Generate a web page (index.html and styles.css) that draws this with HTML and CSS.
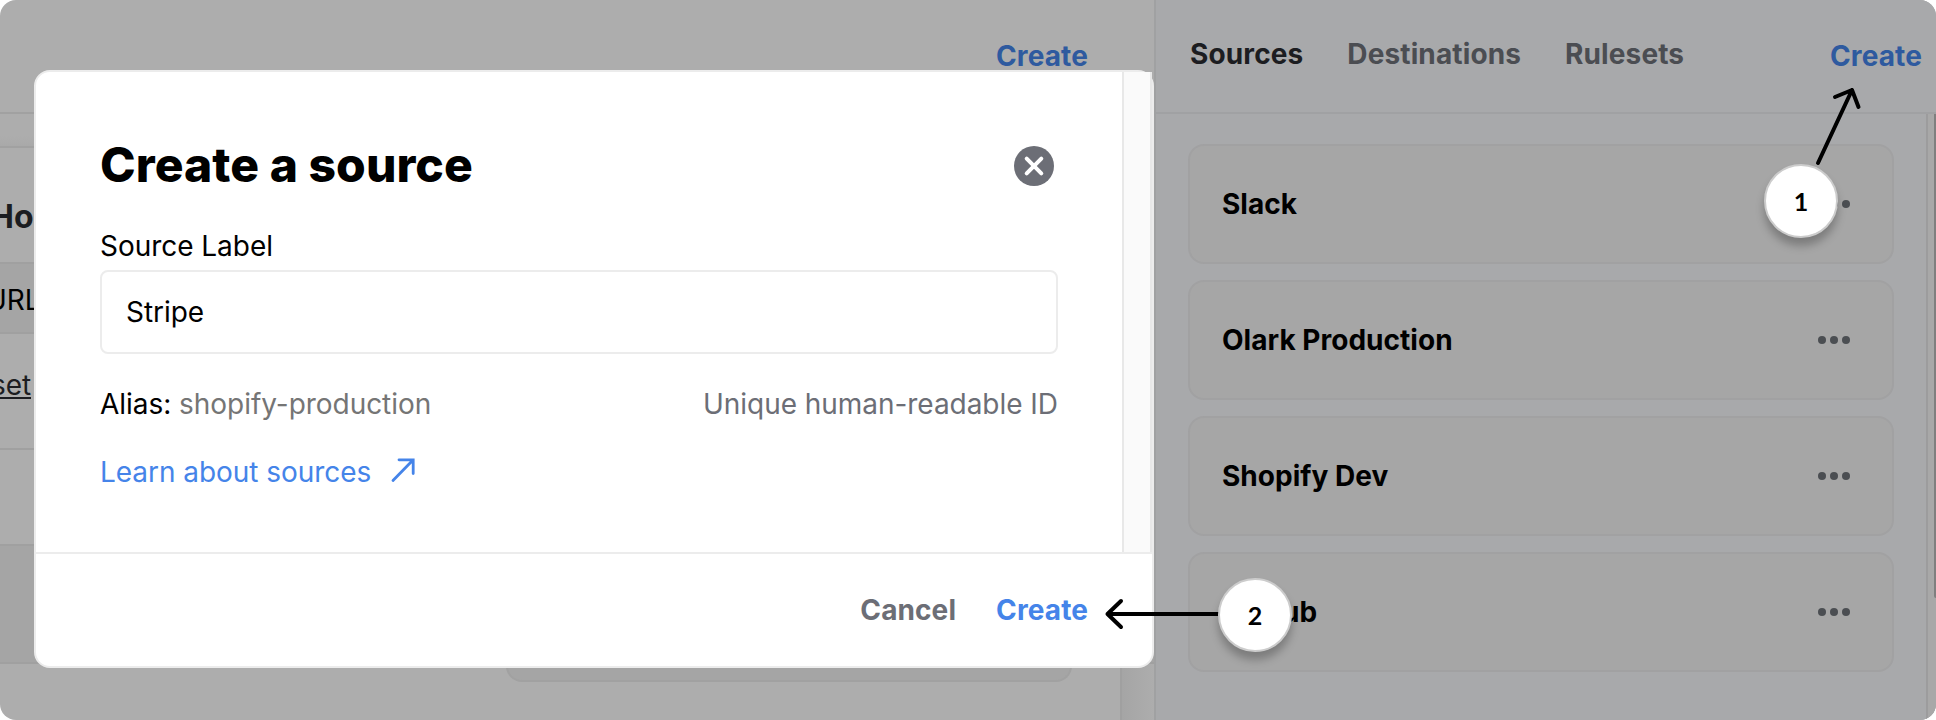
FILE: index.html
```html
<!DOCTYPE html>
<html lang="en">
<head>
<meta charset="utf-8">
<title>Create a source</title>
<link rel="stylesheet" href="styles.css">
</head>
<body>
<div class="stage">
  <section class="left">
    <header class="bar left-bar"><a class="link-create">Create</a></header>
    <div class="rows">
      <div class="gap-row"></div>
      <div class="row row-title">Ho</div>
      <div class="row row-url">URL</div>
      <div class="row row-set"><span>set</span></div>
      <div class="row row-empty"></div>
      <div class="row row-shade"></div>
      <div class="rest"><div class="bottom-card"></div><div class="left-track"></div></div>
    </div>
  </section>
  <section class="right">
    <header class="bar right-bar">
      <nav class="tabs"><span class="active">Sources</span><span>Destinations</span><span>Rulesets</span></nav>
      <a class="link-create">Create</a>
    </header>
    <div class="right-body">
      <div class="cards">
        <div class="card"><b>Slack</b><span class="dots"><i></i><i></i><i></i></span></div>
        <div class="card"><b>Olark Production</b><span class="dots"><i></i><i></i><i></i></span></div>
        <div class="card"><b>Shopify Dev</b><span class="dots"><i></i><i></i><i></i></span></div>
        <div class="card"><b>GitHub</b><span class="dots"><i></i><i></i><i></i></span></div>
      </div>
      <div class="track"><div class="thumb"></div></div>
    </div>
  </section>

  <div class="modal">
    <div class="modal-main">
      <div class="modal-content">
        <div class="modal-head">
          <h1>Create a source</h1>
          <svg class="close" width="40" height="40" viewBox="0 0 40 40"><circle cx="20" cy="20" r="20" fill="#6c6e76"/><path d="M12.7 12.7 27.3 27.3M27.3 12.7 12.7 27.3" stroke="#fff" stroke-width="4" stroke-linecap="round"/></svg>
        </div>
        <label class="label">Source Label</label>
        <div class="input">Stripe</div>
        <div class="alias"><span>Alias: <span class="slug">shopify-production</span></span><span class="hint">Unique human-readable ID</span></div>
        <a class="learn">Learn about sources <svg width="24" height="26" viewBox="0 0 24 26" fill="none" stroke="#4584e9" stroke-width="2.8" stroke-linecap="round"><path d="M2 23.500 22 3M8 2.800H22.200V16.500"/></svg></a>
      </div>
      <div class="modal-track"></div>
    </div>
    <footer class="modal-foot"><span class="cancel">Cancel</span><span class="create">Create</span></footer>
  </div>

  <svg class="arrows" width="1936" height="720" viewBox="0 0 1936 720" fill="none" stroke="#000" stroke-width="4" stroke-linecap="round" stroke-linejoin="round"><path d="M1818 163 1852 90M1835 97 1852 90 1858.500 107"/><path d="M1219 614H1107.500M1121 601 1107.500 614 1121 627"/></svg>
  <div class="callout one">1</div>
  <div class="callout two">2</div>
</div>
</body>
</html>
```

FILE: styles.css
```css
* { box-sizing: border-box; }
body { margin: 0; background: #fff; font-family: Inter, "Liberation Sans", sans-serif; font-size: 28px; color: #000; }
.stage { position: relative; display: flex; width: 1936px; height: 720px; overflow: hidden; border-radius: 16px; background: #adadad; }
.left { width: 1154px; display: flex; flex-direction: column; }
.bar { height: 114px; flex: none; display: flex; border-bottom: 2px solid #a1a1a1; line-height: 34px; font-weight: 700; letter-spacing: 0.12px; }
.link-create { color: #2e5a9f; }
.left-bar { justify-content: flex-end; padding: 39px 66px 0 0; }
.rows { flex: 1; display: flex; flex-direction: column; white-space: nowrap; }
.gap-row { height: 34px; border-bottom: 2px solid #a1a1a1; background: linear-gradient(#adadad 22px, #a9a9a9); }
.row { border-bottom: 2px solid #a0a0a0; line-height: 34px; overflow: hidden; }
.row-title { height: 116px; padding-top: 51px; font-size: 32px; line-height: 36px; font-weight: 700; color: #1c1d21; text-indent: -10px; }
.row-url { height: 70px; padding-top: 19px; background: #a5a5a5; text-indent: -14px; }
.row-set { height: 116px; padding-top: 34px; color: #1c1d21; }
.row-set span { display: inline-block; margin-left: -9px; border-bottom: 2px solid #1c1d21; height: 30px; line-height: 32px; }
.row-empty { height: 96px; }
.row-shade { height: 118px; background: #a5a5a5; }
.rest { flex: 1; display: flex; justify-content: space-between; padding-left: 506px; }
.bottom-card { width: 566px; height: 18px; border: 2px solid #a1a1a1; border-top: 0; border-radius: 0 0 16px 16px; background: #a5a5a5; }
.left-track { width: 34px; border-left: 2px solid #a0a0a0; background: linear-gradient(90deg, #a5a5a5, #adadad); }
.right { flex: 1; display: flex; flex-direction: column; background: #a8a9ab; border-left: 2px solid #a0a1a2; }
.right-bar { justify-content: space-between; padding: 37px 14px 0 34px; border-color: #a0a1a3; }
.right-bar .link-create { padding-top: 2px; }
.tabs { display: flex; gap: 44px; color: #4b4d52; }
.active { color: #1c1d21; }
.right-body { flex: 1; display: flex; justify-content: space-between; padding-left: 32px; }
.cards { width: 706px; padding-top: 30px; display: flex; flex-direction: column; gap: 16px; }
.card { height: 120px; display: flex; align-items: center; justify-content: space-between; padding: 0 42px 0 32px; border: 2px solid #a1a1a2; border-radius: 16px; background: #a6a6a6; }
.card b { font-weight: 700; line-height: 34px; letter-spacing: 0.03px; }
.dots { display: flex; gap: 4px; }
.dots i { width: 8px; height: 8px; border-radius: 50%; background: #4b4e52; }
.track { width: 10px; border-left: 2px solid #9c9c9d; background: #a8a8a8; display: flex; justify-content: flex-end; }
.thumb { width: 2px; height: 484px; background: #7f7f7f; border-radius: 0 0 0 2px; }
.modal { position: absolute; left: 34px; top: 70px; width: 1120px; height: 598px; display: flex; flex-direction: column; background: #fff; border: 2px solid #ececec; border-radius: 16px; }
.modal-main { height: 480px; display: flex; }
.modal-content { flex: 1; padding: 63px 64px 0; letter-spacing: -0.04px; }
.modal-head { display: flex; justify-content: space-between; align-items: flex-start; height: 94px; }
h1 { margin: 0; font-size: 48px; line-height: 60px; font-weight: 800; letter-spacing: 0.06px; }
.close { margin: 11px 4px 0 0; }
.label { display: block; height: 41px; line-height: 34px; }
.input { height: 84px; padding: 0 24px; line-height: 80px; border: 2px solid #ececec; border-radius: 8px; }
.alias { display: flex; justify-content: space-between; margin-top: 33px; line-height: 34px; }
.slug { color: #757575; }
.hint { color: #6c6e76; }
.learn { display: flex; gap: 20px; margin-top: 34px; line-height: 34px; color: #4584e9; }
.learn svg { margin-top: 2px; }
.modal-track { width: 30px; border: solid #e8e8e8; border-width: 0 2px; background: #fafafa; }
.modal-foot { flex: 1; display: flex; justify-content: flex-end; gap: 40px; padding: 39px 64px 0 0; border-top: 2px solid #ececec; font-weight: 700; line-height: 34px; letter-spacing: 0.1px; }
.cancel { color: #6c6e76; }
.create { color: #4584e9; }
.arrows { position: absolute; left: 0; top: 0; }
.callout { position: absolute; width: 74px; height: 74px; border: 2px solid #ccc; border-radius: 50%; background: #fff; box-shadow: 0 8px 8px rgba(0,0,0,.25); font-family: Lato, sans-serif; font-size: 25px; line-height: 70px; text-align: center; font-weight: 700; }
.one { left: 1764px; top: 164px; }
.two { left: 1218px; top: 578px; }
```
